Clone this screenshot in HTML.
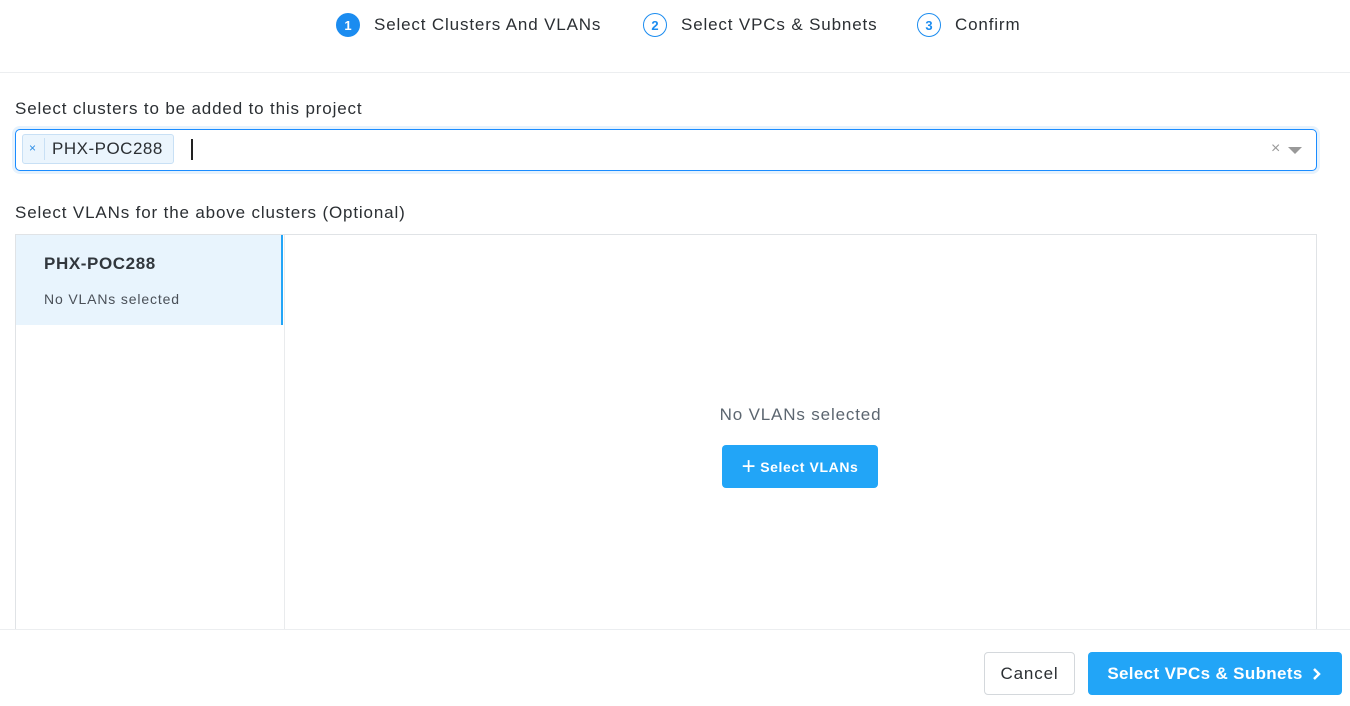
<!DOCTYPE html>
<html><head><style>
*{box-sizing:border-box;margin:0;padding:0}
body{width:1350px;height:706px;background:#fff;font-family:"Liberation Sans",sans-serif;color:#22272e;position:relative;overflow:hidden;letter-spacing:0.85px}
.a{position:absolute}
.step{position:absolute;top:13px;font-size:17px;display:flex;align-items:center;color:#2b2f33}
.c{width:24px;height:24px;border-radius:50%;border:1.5px solid #1b8cf0;color:#1b8cf0;font-size:13px;font-weight:bold;display:flex;align-items:center;justify-content:center;margin-right:14px;letter-spacing:0}
.c.f{background:#1b8cf0;color:#fff}
</style></head><body>
<div class="step" style="left:336px"><span class="c f">1</span>Select Clusters And VLANs</div>
<div class="step" style="left:643px"><span class="c">2</span>Select VPCs &amp; Subnets</div>
<div class="step" style="left:917px"><span class="c">3</span>Confirm</div>
<div class="a" style="left:0;top:72px;width:1350px;height:1px;background:#eceef0"></div>
<div class="a" style="left:15px;top:99px;font-size:17px;color:#2b2f33">Select clusters to be added to this project</div>
<div class="a" style="left:12px;top:126px;width:1308px;height:48px;border-radius:8px;background:#e6f2fd"></div>
<div class="a" style="left:15px;top:129px;width:1302px;height:42px;border:1.5px solid #1a8cff;border-radius:5px;background:#fff"></div>
<div class="a" style="left:22px;top:134px;width:152px;height:30px;border:1px solid #c8e0f5;border-radius:3px;background:#ebf5fd"></div>
<div class="a" style="left:29px;top:141px;font-size:12px;color:#2c8de6">×</div>
<div class="a" style="left:44px;top:138px;width:1px;height:22px;background:#c8e0f5"></div>
<div class="a" style="left:52px;top:139px;font-size:17px;color:#2b2f33;letter-spacing:0.5px">PHX-POC288</div>
<div class="a" style="left:191px;top:139px;width:2px;height:21px;background:#222"></div>
<div class="a" style="left:1271px;top:140px;font-size:16px;color:#999">×</div>
<div class="a" style="left:1288px;top:147px;width:0;height:0;border-left:7px solid transparent;border-right:7px solid transparent;border-top:7px solid #999"></div>
<div class="a" style="left:15px;top:203px;font-size:17px;color:#2b2f33">Select VLANs for the above clusters (Optional)</div>
<div class="a" style="left:15px;top:234px;width:1302px;height:420px;border:1px solid #e0e3e6"></div>
<div class="a" style="left:284px;top:235px;width:1px;height:400px;background:#e9ebed"></div>
<div class="a" style="left:16px;top:235px;width:267px;height:90px;background:#e8f4fd;border-right:2px solid #22a5f7"></div>
<div class="a" style="left:44px;top:254px;font-size:17px;font-weight:bold;color:#31373d;letter-spacing:0.6px">PHX-POC288</div>
<div class="a" style="left:44px;top:291px;font-size:14px;color:#4a5058">No VLANs selected</div>
<div class="a" style="left:285px;top:405px;width:1031px;text-align:center;font-size:17px;color:#5c6670">No VLANs selected</div>
<div class="a" style="left:722px;top:445px;width:156px;height:43px;background:#22a5f7;border-radius:4px;color:#fff;font-weight:bold;font-size:14px;display:flex;align-items:center;justify-content:center;letter-spacing:0.6px"><span style="font-size:24px;font-weight:normal;margin-right:4px;line-height:1">+</span>Select VLANs</div>
<div class="a" style="left:0;top:629px;width:1350px;height:77px;background:#fff;border-top:1px solid #eceef0"></div>
<div class="a" style="left:984px;top:652px;width:91px;height:43px;border:1px solid #d4d8dc;border-radius:4px;font-size:17px;display:flex;align-items:center;justify-content:center;color:#2b2f33">Cancel</div>
<div class="a" style="left:1088px;top:652px;width:254px;height:43px;background:#22a5f7;border-radius:4px;color:#fff;font-size:17px;font-weight:bold;display:flex;align-items:center;justify-content:center;letter-spacing:0.35px">Select VPCs &amp; Subnets <svg width="12" height="14" viewBox="0 0 12 14" style="margin-left:8px"><path d="M3 2l5 5-5 5" fill="none" stroke="#fff" stroke-width="2.5"/></svg></div>
</body></html>
